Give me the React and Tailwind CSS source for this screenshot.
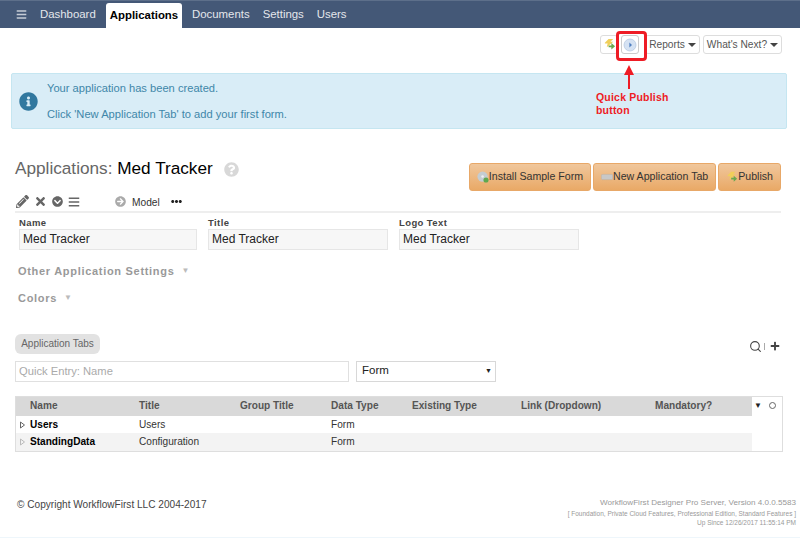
import React from 'react';
import { FaPencilAlt, FaTimes, FaChevronCircleDown, FaBars, FaArrowCircleRight, FaEllipsisH, FaInfoCircle, FaQuestionCircle, FaPlus } from 'react-icons/fa';
import { Search } from 'lucide-react';

const PublishIcon = ({ size = 12 }) => (
  <svg width={size} height={size} viewBox="0 0 14 14">
    <path d="M2 5 L6 1 H11 L8 4 H11 L4 10 L5 6 H2 Z" fill="#f0cf5a" />
    <path d="M6 8 H9 V5.5 L13 9 L9 12.5 V10 H6 Z" fill="#6aa84f" />
  </svg>
);

const DiscIcon = () => (
  <svg width="12" height="12" viewBox="0 0 14 14">
    <circle cx="6.5" cy="6.5" r="6" fill="#c4ccd2" />
    <circle cx="6.5" cy="6.5" r="1.5" fill="#eef1f3" />
    <circle cx="10.5" cy="10.5" r="3" fill="#5fa84f" />
  </svg>
);

const TabIcon = () => (
  <svg width="12" height="12" viewBox="0 0 14 14">
    <rect x="0.5" y="4" width="13" height="6" rx="1" fill="#c8c8c8" stroke="#b0b0b0" strokeWidth="0.5" />
  </svg>
);

const PlayDisc = () => (
  <svg width="14" height="14" viewBox="0 0 14 14">
    <circle cx="7" cy="7" r="6" fill="#d5e2f3" stroke="#b8c9e0" strokeWidth="0.8" />
    <path d="M6.4 4.6 L9 7 L6.4 9.4 Z" fill="#4f7fc0" />
  </svg>
);

const Caret = () => (
  <span className="inline-block w-0 h-0 border-x-[4px] border-x-transparent border-t-[4px] border-t-[#444]" />
);

const Field = ({ label, width }) => (
  <div className={`flex flex-col ${width}`}>
    <label className="text-[9.5px] leading-[12px] font-bold tracking-[0.4px] text-[#444]">{label}</label>
    <div className="h-[21px] bg-[#f7f7f7] border border-[#e6e6e6] text-[12px] leading-[19px] pl-[3px] text-[#222]">Med Tracker</div>
  </div>
);

const OrangeButton = ({ icon, label }) => (
  <button className="h-[28px] px-[7px] flex items-center text-[10.6px] text-[#333] rounded-[3px] border border-[#e8a868] bg-gradient-to-b from-[#f0c79c] to-[#e9a966]">
    {icon}
    {label}
  </button>
);

const columns = [
  { label: 'Name', width: 'w-[109px]' },
  { label: 'Title', width: 'w-[101px]' },
  { label: 'Group Title', width: 'w-[91px]' },
  { label: 'Data Type', width: 'w-[81px]' },
  { label: 'Existing Type', width: 'w-[109px]' },
  { label: 'Link (Dropdown)', width: 'w-[134px]' },
  { label: 'Mandatory?', width: 'w-[97px]' },
];

const rows = [
  { name: 'Users', title: 'Users', type: 'Form', arrow: '#666', bg: 'bg-white', height: 'h-[17px]' },
  { name: 'StandingData', title: 'Configuration', type: 'Form', arrow: '#bbb', bg: 'bg-[#f3f3f3]', height: 'h-[18px]' },
];

const App = () => {
  return (
    <div className="relative w-[800px] h-[538px] overflow-hidden bg-white border-b border-b-[#eef6fb] font-['Liberation_Sans',Arial,sans-serif] text-[#333]">
      {/* Top nav */}
      <nav className="h-[28px] bg-[#445877] border-t border-t-[#5d6f8a] flex items-end pl-[16px]">
        <div className="h-[27px] flex items-center w-[24px]">
          <FaBars size={11} className="text-[#c5ccd6]" />
        </div>
        <div className="h-[27px] flex items-center text-[11.4px] text-[#e4e7ec] w-[66px]">Dashboard</div>
        <div className="h-[25px] w-[76px] bg-white rounded-t-[3px] flex items-center justify-center text-[11.4px] font-bold text-black">Applications</div>
        <div className="h-[27px] flex items-center text-[11.4px] text-[#e4e7ec] ml-[10px]">Documents</div>
        <div className="h-[27px] flex items-center text-[11.4px] text-[#e4e7ec] ml-[13px]">Settings</div>
        <div className="h-[27px] flex items-center text-[11.4px] text-[#e4e7ec] ml-[13px]">Users</div>
      </nav>

      {/* Toolbar */}
      <div className="flex justify-end items-center mt-[7px] pr-[18px] h-[19px]">
        <div className="w-[18px] h-[19px] border border-[#ddd] rounded-[3px] flex items-center justify-center"><PublishIcon size={13} /></div>
        <div className="w-[18px] h-[19px] ml-[3px] border border-[#ccc] rounded-[3px] flex items-center justify-center"><PlayDisc /></div>
        <div className="w-[55px] h-[19px] ml-[6px] border border-[#ddd] rounded-[3px] flex items-center justify-center gap-[3px] text-[10.2px] text-[#555]">Reports <Caret /></div>
        <div className="w-[79px] h-[19px] ml-[3px] border border-[#ddd] rounded-[3px] flex items-center justify-center gap-[3px] text-[10.2px] text-[#555]">What's Next? <Caret /></div>
      </div>

      {/* Alert */}
      <div className="mt-[19px] ml-[11px] mr-[13px] h-[56px] bg-[#d9edf7] border border-[#c5e6f1] rounded-[2px] flex items-center text-[11.15px] text-[#3f87a9]">
        <FaInfoCircle size={19} className="ml-[7px] text-[#31789f]" />
        <div className="ml-[9px] leading-[26px]">
          <div>Your application has been created.</div>
          <div>Click 'New Application Tab' to add your first form.</div>
        </div>
      </div>

      {/* Heading and actions */}
      <div className="flex justify-between items-center mt-[34px] pl-[15px] pr-[19px] h-[28px]">
        <div className="flex items-center text-[17.2px] mb-[16px]">
          <span className="text-[#666]">Applications:&nbsp;</span>
          <span className="text-black">Med Tracker</span>
          <FaQuestionCircle size={15} className="ml-[11px] text-[#d8d8d8]" />
        </div>
        <div className="flex gap-[2px]">
          <OrangeButton icon={<DiscIcon />} label="Install Sample Form" />
          <OrangeButton icon={<TabIcon />} label="New Application Tab" />
          <OrangeButton icon={<PublishIcon />} label="Publish" />
        </div>
      </div>

      {/* Model toolbar */}
      <div className="flex items-center ml-[15px] mr-[19px] mt-[1px] h-[21px] border-b-2 border-b-[#eeeeee] text-[#666]">
        <FaPencilAlt size={13} className="ml-px" />
        <FaTimes size={13} className="ml-[5px]" />
        <FaChevronCircleDown size={11} className="ml-[5px]" />
        <FaBars size={12} className="ml-[5px]" />
        <FaArrowCircleRight size={11} className="ml-[35px] text-[#aaa]" />
        <span className="ml-[6px] text-[10.2px] text-[#333] mt-[2px]">Model</span>
        <FaEllipsisH size={11} className="ml-[11px] text-[#222]" />
      </div>

      {/* Application fields */}
      <div className="flex gap-[11px] ml-[19px] mt-[4px]">
        <Field label="Name" width="w-[178px]" />
        <Field label="Title" width="w-[180px]" />
        <Field label="Logo Text" width="w-[180px]" />
      </div>

      {/* Collapsed sections */}
      <div className="ml-[18px] mt-[14px] flex items-center h-[14px] text-[11px] font-bold tracking-[0.7px] text-[#999]">
        Other Application Settings<span className="ml-[7px] text-[8px] text-[#bbb]">▼</span>
      </div>
      <div className="ml-[18px] mt-[13px] flex items-center h-[14px] text-[11px] font-bold tracking-[0.7px] text-[#999]">
        Colors<span className="ml-[7px] text-[8px] text-[#bbb]">▼</span>
      </div>

      {/* Application tabs */}
      <div className="flex justify-between items-center ml-[15px] mr-[20px] mt-[29px] h-[20px]">
        <div className="h-[20px] w-[85px] rounded-[6px] bg-[#e2e2e2] flex items-center justify-center pb-px text-[10px] text-[#666]">Application Tabs</div>
        <div className="flex items-center text-[#444] mt-[4px]">
          <Search size={13} strokeWidth={2} />
          <span className="mx-[2px] h-[7px] w-px bg-[#aaa]" />
          <FaPlus size={10} className="ml-[3px]" />
        </div>
      </div>

      <div className="flex ml-[15px] mt-[7px] gap-[7px]">
        <div className="w-[334px] h-[21px] border border-[#e0e0e0] text-[11.2px] leading-[18px] pl-[3px] text-[#aaa]">Quick Entry: Name</div>
        <div className="w-[140px] h-[21px] border border-[#d8d8d8] text-[11.5px] pb-px pl-[5px] text-[#222] flex items-center justify-between pr-[3px]">
          Form
          <span className="text-[7px] text-[#222]">▼</span>
        </div>
      </div>

      {/* Grid */}
      <div className="ml-[15px] mr-[17px] mt-[14px] h-[56px] border border-[#dedede] flex">
        <div className="w-[736px]">
          <div className="h-[19px] bg-[#d9d9d9] flex items-center pb-[2px] pl-[14px] text-[10.1px] font-bold text-[#555]">
            {columns.map((col) => (
              <div key={col.label} className={col.width}>{col.label}</div>
            ))}
          </div>
          {rows.map((row) => (
            <div key={row.name} className={`flex items-center text-[10.1px] text-[#333] ${row.height} ${row.bg}`}>
              <svg width="14" height="8" viewBox="0 0 14 8">
                <path d="M4.5 1 L8.5 4 L4.5 7 Z" fill="none" stroke={row.arrow} />
              </svg>
              <div className="w-[109px] font-bold text-black">{row.name}</div>
              <div className="w-[101px]">{row.title}</div>
              <div className="w-[91px]" />
              <div>{row.type}</div>
            </div>
          ))}
        </div>
        <div className="flex-1 flex items-start gap-[7px] pt-[5px] pl-[2px]">
          <span className="text-[8px] leading-[8px] text-[#222]">▼</span>
          <span className="w-[7px] h-[7px] rounded-full border border-[#666]" />
        </div>
      </div>

      {/* Footer */}
      <div className="flex justify-between items-start ml-[17px] mr-[4px] mt-[45px]">
        <div className="text-[10.1px] text-[#444]">© Copyright WorkflowFirst LLC 2004-2017</div>
        <div className="text-right text-[#999]">
          <div className="text-[8.1px] leading-[12px]">WorkflowFirst Designer Pro Server, Version 4.0.0.5583</div>
          <div className="text-[6.5px] leading-[9px]">[ Foundation, Private Cloud Features, Professional Edition, Standard Features ]</div>
          <div className="text-[6.5px] leading-[10px]">Up Since 12/26/2017 11:55:14 PM</div>
        </div>
      </div>

      {/* Annotation */}
      <div className="absolute left-[616px] top-[31px] w-[31px] h-[30px] border-[3px] border-[#ee1c25] rounded-[4px]" />
      <svg className="absolute left-[623px] top-[65px]" width="12" height="24" viewBox="0 0 12 24">
        <path d="M6 0 L11 10 H7 V24 H5 V10 H1 Z" fill="#ee1c25" />
      </svg>
      <div className="absolute left-[596px] top-[91px] text-[10.5px] leading-[13px] font-bold tracking-[0.2px] text-[#ee1c25]">
        Quick Publish<br />button
      </div>
    </div>
  );
};

export default App;
